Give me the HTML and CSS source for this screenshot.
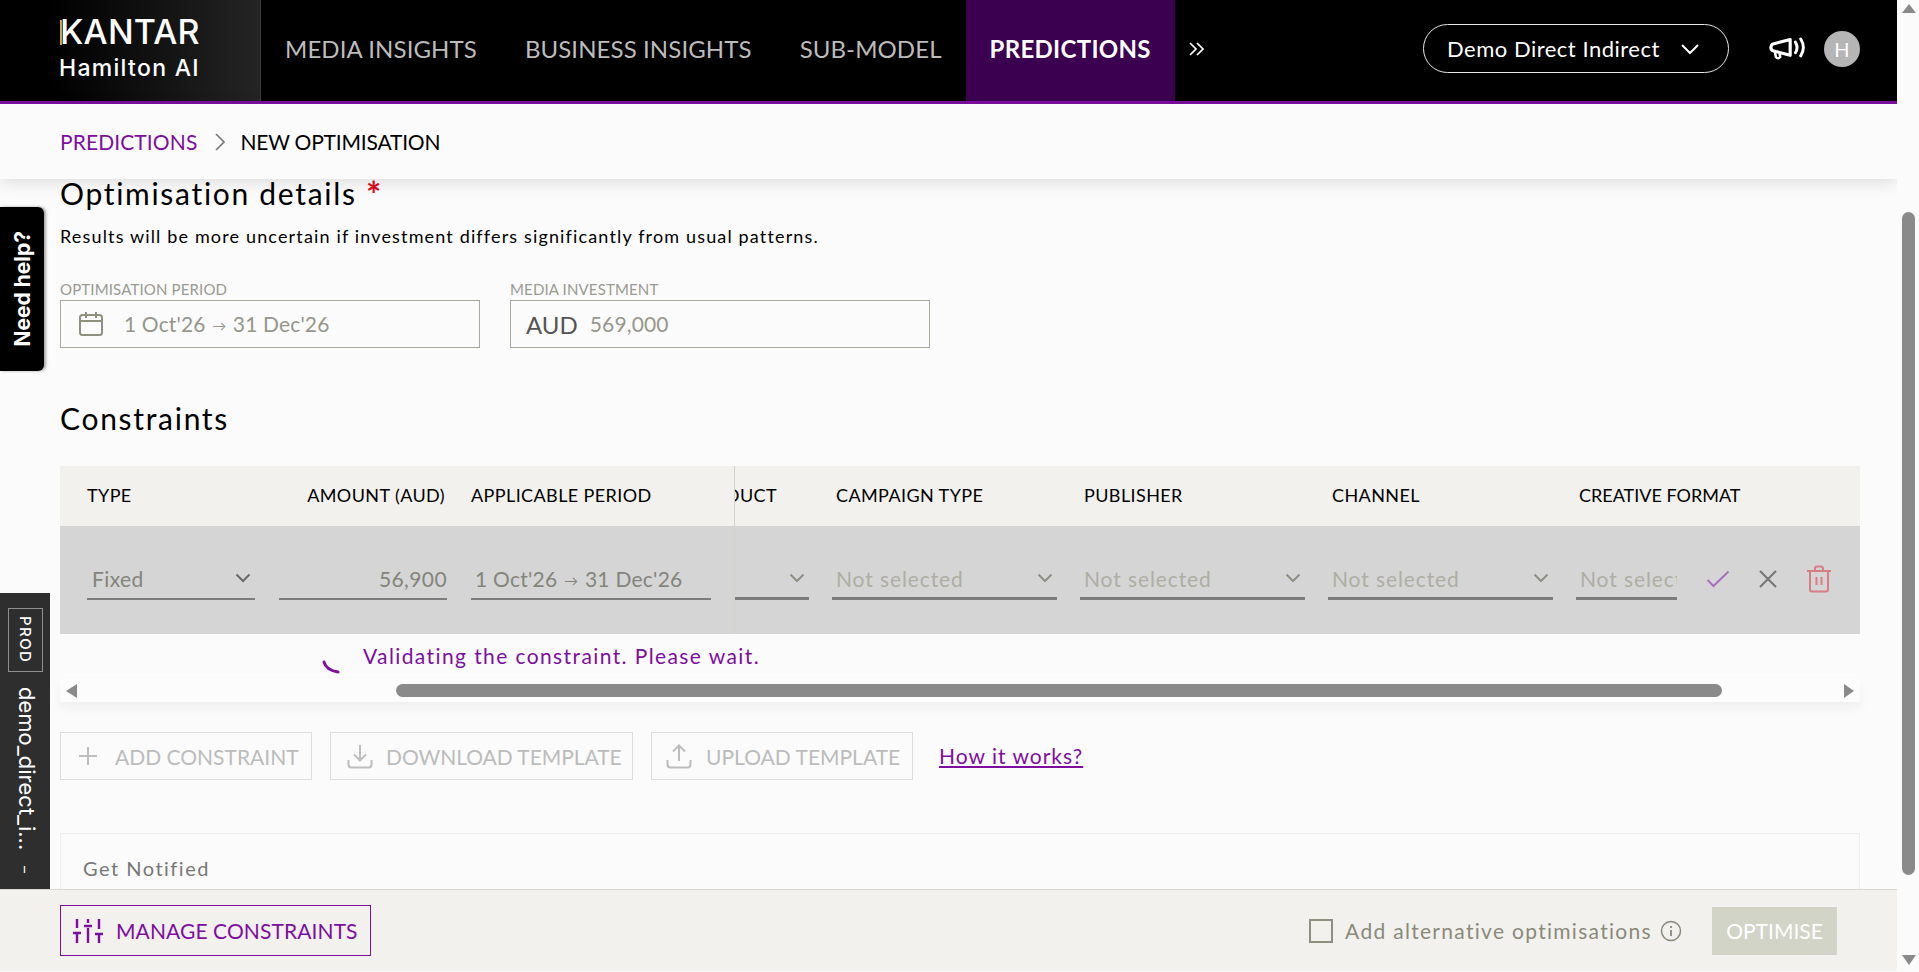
FILE: index.html
```html
<!DOCTYPE html>
<html lang="en">
<head>
<meta charset="utf-8">
<title>New optimisation</title>
<link rel="stylesheet" href="styles.css">
</head>
<body>
<div class="app">
  <div class="main">
    <header class="topbar">
      <div class="brand">
        <div class="brand-name">KANTAR</div>
        <div class="brand-sub">Hamilton AI</div>
      </div>
      <nav class="nav">
        <a class="nav-item nav-media">MEDIA INSIGHTS</a>
        <a class="nav-item nav-business">BUSINESS INSIGHTS</a>
        <a class="nav-item nav-sub">SUB-MODEL</a>
        <a class="nav-item nav-active">PREDICTIONS</a>
        <svg class="nav-more" viewBox="0 0 18 14"><path d="M2 1l6 6-6 6M9 1l6 6-6 6" fill="none" stroke="#fff" stroke-width="1.7"/></svg>
      </nav>
      <div class="topbar-right">
        <button class="model-pill"><span>Demo Direct Indirect</span>
          <svg class="pill-chevron" viewBox="0 0 20 12"><path d="M2 2l8 8 8-8" fill="none" stroke="#fff" stroke-width="2"/></svg>
        </button>
        <svg class="megaphone" viewBox="0 0 36 22"><path d="M4 6.500L21 2v15L4 12.500Q1.500 9.500 4 6.500z" fill="none" stroke="#fff" stroke-width="3" stroke-linejoin="round"/><path d="M6.500 13.500l1 5q2 2.500 4 0l-.5-3.500" fill="none" stroke="#fff" stroke-width="2.400" stroke-linejoin="round"/><path d="M26 4.500q3 5 0 10M31 1.500q5 8 0 16" fill="none" stroke="#fff" stroke-width="2.800" stroke-linecap="round"/></svg>
        <div class="avatar">H</div>
      </div>
    </header>

    <div class="crumbs">
      <a class="crumb-link">PREDICTIONS</a>
      <svg class="crumb-sep" viewBox="0 0 10 18"><path d="M1 1l8 8-8 8" fill="none" stroke="#777" stroke-width="1.600"/></svg>
      <span class="crumb-current">NEW OPTIMISATION</span>
    </div>

    <main class="content">
      <h2 class="section-title">Optimisation details <span class="required">*</span></h2>
      <p class="section-note">Results will be more uncertain if investment differs significantly from usual patterns.</p>

      <div class="fields">
        <div class="field">
          <label class="field-label">OPTIMISATION PERIOD</label>
          <div class="field-box">
            <svg class="cal-icon" viewBox="0 0 26 26"><rect x="2" y="4" width="22" height="20" rx="2.500" fill="none" stroke="#8f907f" stroke-width="2"/><path d="M2 10h22M8 1v6M18 1v6" fill="none" stroke="#8f907f" stroke-width="2"/></svg>
            <span class="field-value">1 Oct'26 <span class="date-arrow">→</span> 31 Dec'26</span>
          </div>
        </div>
        <div class="field">
          <label class="field-label">MEDIA INVESTMENT</label>
          <div class="field-box field-box-money">
            <span class="currency">AUD</span>
            <span class="field-value">569,000</span>
          </div>
        </div>
      </div>

      <h2 class="section-title constraints-title">Constraints</h2>

      <div class="table">
        <div class="pinned">
          <div class="th-row">
            <div class="th col-type">TYPE</div>
            <div class="th col-amount">AMOUNT (AUD)</div>
            <div class="th col-period">APPLICABLE PERIOD</div>
          </div>
          <div class="td-row">
            <div class="cell col-type"><span class="cell-text">Fixed</span><svg class="chev" viewBox="0 0 16 10"><path d="M1.500 1.500L8 8l6.500-6.500" fill="none" stroke="#6a6a6a" stroke-width="2"/></svg></div>
            <div class="cell col-amount cell-right"><span class="cell-text">56,900</span></div>
            <div class="cell col-period"><span class="cell-text">1 Oct'26 <span class="date-arrow">→</span> 31 Dec'26</span></div>
          </div>
        </div>
        <div class="scroller">
          <div class="th-row">
            <div class="th col-product"><span>PRODUCT</span></div>
            <div class="th col-wide">CAMPAIGN TYPE</div>
            <div class="th col-wide">PUBLISHER</div>
            <div class="th col-wide">CHANNEL</div>
            <div class="th col-last">CREATIVE FORMAT</div>
          </div>
          <div class="td-row">
            <div class="cell cell-thick col-product-cell"><svg class="chev chev-light" viewBox="0 0 16 10"><path d="M1.500 1.500L8 8l6.500-6.500" fill="none" stroke="#8f8f85" stroke-width="2"/></svg></div>
            <div class="cell cell-thick col-wide-cell"><span class="cell-muted">Not selected</span><svg class="chev chev-light" viewBox="0 0 16 10"><path d="M1.500 1.500L8 8l6.500-6.500" fill="none" stroke="#8f8f85" stroke-width="2"/></svg></div>
            <div class="cell cell-thick col-wide-cell"><span class="cell-muted">Not selected</span><svg class="chev chev-light" viewBox="0 0 16 10"><path d="M1.500 1.500L8 8l6.500-6.500" fill="none" stroke="#8f8f85" stroke-width="2"/></svg></div>
            <div class="cell cell-thick col-wide-cell"><span class="cell-muted">Not selected</span><svg class="chev chev-light" viewBox="0 0 16 10"><path d="M1.500 1.500L8 8l6.500-6.500" fill="none" stroke="#8f8f85" stroke-width="2"/></svg></div>
            <div class="cell cell-thick col-last-cell"><span class="cell-muted">Not selected</span></div>
            <div class="row-actions">
              <svg class="act-check" viewBox="0 0 24 18"><path d="M1.500 10l6 6L22.500 1.500" fill="none" stroke="#ab6cc4" stroke-width="2"/></svg>
              <svg class="act-close" viewBox="0 0 18 18"><path d="M1 1l16 16M17 1L1 17" fill="none" stroke="#757575" stroke-width="2"/></svg>
              <svg class="act-trash" viewBox="0 0 26 28"><path d="M1 6h24M9 6V3.500Q9 1.500 11 1.500h4q2 0 2 2V6M4 6v18.500Q4 26.500 6 26.500h14q2 0 2-2V6M10.500 12v8M15.500 12v8" fill="none" stroke="#d97d84" stroke-width="2"/></svg>
            </div>
          </div>
        </div>
      </div>

      <div class="validation">
        <svg class="spinner" viewBox="0 0 18 14"><path d="M2 2q2 8 14 10" fill="none" stroke="#7d0ea0" stroke-width="3" stroke-linecap="round"/></svg>
        <span>Validating the constraint. Please wait.</span>
      </div>

      <div class="hscroll">
        <i class="arrow-left"></i>
        <div class="hscroll-track"><div class="hscroll-thumb"></div></div>
        <i class="arrow-right"></i>
      </div>

      <div class="actions">
        <button class="ghost-btn btn-add">
          <svg class="btn-icon-plus" viewBox="0 0 18 18"><path d="M9 0v18M0 9h18" fill="none" stroke="#bdbdbd" stroke-width="2"/></svg>
          ADD CONSTRAINT</button>
        <button class="ghost-btn btn-down">
          <svg class="btn-icon" viewBox="0 0 26 26"><path d="M13 2v15M7 11.500l6 6 6-6M1.500 17v4.500q0 3 3 3h17q3 0 3-3V17" fill="none" stroke="#bdbdbd" stroke-width="2"/></svg>
          DOWNLOAD TEMPLATE</button>
        <button class="ghost-btn btn-up">
          <svg class="btn-icon" viewBox="0 0 26 26"><path d="M13 18V3M7 8.500l6-6 6 6M1.500 17v4.500q0 3 3 3h17q3 0 3-3V17" fill="none" stroke="#bdbdbd" stroke-width="2"/></svg>
          UPLOAD TEMPLATE</button>
        <a class="how-link">How it works?</a>
      </div>

      <section class="notify">Get Notified</section>
    </main>

    <footer class="footer">
      <button class="manage-btn">
        <svg class="manage-icon" viewBox="0 0 30 24"><path d="M4 0v9M4 14v10M15 0v4M15 9v15M26 0v10M26 15v9M0 14h8M11 7h8M22 15h8" fill="none" stroke="#7d0ea0" stroke-width="2.400"/></svg>
        MANAGE CONSTRAINTS</button>
      <div class="footer-right">
        <span class="checkbox"></span>
        <span class="alt-label">Add alternative optimisations</span>
        <svg class="info" viewBox="0 0 22 22"><circle cx="11" cy="11" r="9.500" fill="none" stroke="#8a8a7a" stroke-width="1.500"/><path d="M11 10v6M11 6v2" fill="none" stroke="#8a8a7a" stroke-width="1.800"/></svg>
        <button class="optimise-btn">OPTIMISE</button>
      </div>
    </footer>
  </div>

  <aside class="vscroll">
    <i class="arrow-up"></i>
    <div class="vscroll-track"><div class="vscroll-thumb"></div></div>
    <i class="arrow-down"></i>
  </aside>

  <div class="help-tab"><span>Need help?</span></div>
  <div class="env-tab">
    <span class="env-badge">PROD</span>
    <span class="env-name">demo_direct_i...</span>
    <span class="env-dash">–</span>
  </div>
</div>
</body>
</html>
```

FILE: styles.css
```css
* { box-sizing: border-box; }
html, body { margin: 0; height: 100%; overflow: hidden; }
body { font-family: "Lato", "Liberation Sans", sans-serif; background: #fbfbfb; color: #000; }
button { font-family: inherit; }

.app { position: relative; display: flex; height: 972px; }
.main { width: 1897px; flex: none; display: flex; flex-direction: column; height: 971px; overflow: hidden; }

/* top bar */
.topbar { height: 104px; flex: none; display: flex; background: #000; border-bottom: 3px solid #7d0ea0; }
.brand { width: 261px; padding: 12px 0 0 60px; background: linear-gradient(90deg, #000 20%, #242424 100%); border-right: 1px solid #3a3a3a; color: #fff; font-family: "Inter", sans-serif; font-weight: 500; }
.brand-name { position: relative; font-size: 34px; line-height: 40px; letter-spacing: .2px; }
.brand-name::before { content: ""; position: absolute; left: 0; top: 8px; width: 1.500px; height: 25px; background: #c9a93c; }
.brand-sub { font-size: 23px; line-height: 29px; letter-spacing: 1.300px; margin: 2px 0 0 -1px; }
.nav { display: flex; align-items: stretch; }
.nav-item { display: flex; align-items: center; font-size: 24px; color: #bcbcbc; padding: 0 24px 4px; letter-spacing: .1px; }
.nav-active { background: #3c0050; color: #fff; font-weight: 700; letter-spacing: .3px; }
.nav-more { width: 18px; height: 14px; align-self: center; margin: 0 0 4px 13px; }
.topbar-right { margin-left: auto; display: flex; align-items: center; padding: 0 37px 4px 0; }
.model-pill { width: 306px; height: 49px; background: #000; border: 1px solid #e8e8e8; border-radius: 25px; color: #fff; font-size: 22px; padding: 0 28px 0 23px; display: flex; align-items: center; justify-content: space-between; letter-spacing: .5px; }
.pill-chevron { width: 20px; height: 12px; }
.megaphone { width: 38px; height: 24px; margin-left: 39px; }
.avatar { width: 36px; height: 36px; border-radius: 50%; background: #b5b5b5; color: #fff; margin-left: 18px; display: flex; align-items: center; justify-content: center; font-size: 20px; }

/* breadcrumb */
.crumbs { position: relative; z-index: 2; height: 75px; flex: none; display: flex; align-items: center; padding-left: 60px; background: #fbfbfb; font-size: 21px; box-shadow: 0 3px 16px rgba(0, 0, 0, .13); }
.crumb-link { color: #7d0ea0; letter-spacing: .1px; }
.crumb-sep { width: 10px; height: 18px; margin: 0 15px 0 18px; }
.crumb-current { letter-spacing: -.2px; }

/* content */
.content { flex: 1; min-height: 0; padding: 0 37px 0 60px; }
.section-title { margin: 0; height: 30px; font-weight: 400; font-size: 30px; line-height: 28px; letter-spacing: 1.700px; white-space: nowrap; }
.required { color: #d80f1e; font-size: 36px; font-weight: 700; letter-spacing: 0; line-height: 28px; vertical-align: -3px; }
.section-note { margin: 15px 0 0; font-size: 18px; line-height: 24px; letter-spacing: 1.150px; }
.fields { display: flex; gap: 30px; margin-top: 33px; }
.field { width: 420px; }
.field-label { display: block; font-size: 15px; line-height: 16px; color: #999a92; margin-bottom: 3px; letter-spacing: .15px; }
.field-box { height: 48px; border: 1px solid #a8a99a; display: flex; align-items: center; padding-left: 17px; }
.cal-icon { width: 26px; height: 26px; margin-right: 20px; }
.field-value { font-size: 21px; color: #96968c; letter-spacing: .15px; padding-bottom: 2px; }
.date-arrow { font-size: 14px; vertical-align: 1px; margin: 0 1px; }
.field-box-money { padding-left: 15px; }
.currency { font-size: 24px; color: #555; margin-right: 12px; }
.constraints-title { margin-top: 56px; }

/* table */
.table { display: flex; margin-top: 32px; }
.pinned { width: 675px; flex: none; }
.scroller { flex: 1; min-width: 0; overflow: hidden; border-left: 1px solid #d4d4c8; margin-left: -1px; }
.th-row { height: 60px; background: #f2f1ed; display: flex; align-items: center; font-size: 18px; letter-spacing: .4px; padding-bottom: 2px; }
.td-row { height: 108px; background: #d5d5d5; display: flex; align-items: flex-start; padding-top: 46px; }
.col-type { width: 168px; margin-left: 27px; flex: none; }
.col-amount { width: 168px; margin-left: 24px; flex: none; text-align: right; }
.col-period { width: 240px; margin-left: 24px; flex: none; }
.th.col-amount { padding-right: 2px; }
.col-product { width: 97px; overflow: hidden; display: flex; justify-content: flex-end; padding-right: 55px; flex: none; }
.col-product span { flex: none; }
.col-wide { width: 248px; padding-left: 4px; flex: none; }
.col-last { flex: none; padding-left: 3px; white-space: nowrap; letter-spacing: 0; }
.cell { height: 28px; border-bottom: 2px solid #7d7d7d; display: flex; align-items: center; justify-content: space-between; font-size: 21px; padding-bottom: 14px; }
.cell-thick { border-bottom-width: 3px; padding-bottom: 13px; }
.cell-right { justify-content: flex-end; }
.col-type .cell-text { margin-left: 5px; }
.col-period .cell-text { margin-left: 4px; letter-spacing: .25px; }
.cell-text { color: #84847c; letter-spacing: .4px; white-space: nowrap; }
.cell-muted { color: #aeaea2; letter-spacing: .9px; white-space: nowrap; overflow: hidden; margin-left: 4px; }
.chev { width: 16px; height: 10px; margin-right: 4px; flex: none; }
.col-product-cell { width: 74px; justify-content: flex-end; flex: none; }
.col-wide-cell { width: 225px; margin-left: 23px; flex: none; }
.col-last-cell { width: 101px; margin-left: 23px; flex: none; overflow: hidden; justify-content: flex-start; }
.row-actions { display: flex; align-items: center; height: 30px; margin: -8px 0 0 29px; }
.act-check { width: 24px; height: 18px; }
.act-close { width: 18px; height: 18px; margin-left: 29px; }
.act-trash { width: 26px; height: 28px; margin-left: 29px; }

.validation { height: 45px; display: flex; align-items: flex-start; padding: 9px 0 0 262px; color: #7d0ea0; font-size: 21px; letter-spacing: 1.400px; line-height: 26px; }
.spinner { width: 18px; height: 14px; margin: 17px 23px 0 0; }

.hscroll { height: 23px; background: #fcfcfc; display: flex; align-items: center; box-shadow: 0 6px 12px rgba(0, 0, 0, .05); }
.arrow-left { width: 0; height: 0; margin-left: 6px; border: 7px solid transparent; border-left: 0; border-right: 11px solid #8a8a8a; }
.arrow-right { width: 0; height: 0; margin-right: 6px; border: 7px solid transparent; border-right: 0; border-left: 10px solid #8a8a8a; }
.hscroll-track { flex: 1; padding-left: 319px; padding-right: 122px; }
.hscroll-thumb { height: 13px; border-radius: 7px; background: #8a8a8a; }

.actions { display: flex; align-items: center; margin-top: 30px; }
.ghost-btn { height: 48px; display: flex; align-items: center; background: transparent; border: 1px solid #dcdcdc; color: #bcbcbc; font-size: 21px; padding: 0; white-space: nowrap; }
.btn-add { width: 252px; padding-left: 18px; }
.btn-down { width: 303px; margin-left: 18px; padding-left: 16px; letter-spacing: -.05px; }
.btn-up { width: 262px; margin-left: 18px; padding-left: 14px; }
.btn-icon-plus { width: 18px; height: 18px; margin-right: 18px; }
.btn-down .btn-icon { margin-right: 13px; }
.btn-icon { width: 26px; height: 26px; margin-right: 14px; }
.how-link { margin-left: 26px; color: #7d0ea0; font-size: 21px; text-decoration: underline; letter-spacing: 1px; padding-bottom: 2px; }

.notify { margin-top: 53px; height: 80px; border: 1px solid #eeeeec; padding: 21px 0 0 22px; font-size: 20px; line-height: 26px; color: #777; letter-spacing: 1.500px; }

/* footer */
.footer { height: 82px; flex: none; display: flex; align-items: center; justify-content: space-between; background: #f2f1ed; border-top: 1px solid #d8d8d0; padding: 0 60px; position: relative; z-index: 2; }
.manage-btn { width: 311px; height: 51px; display: flex; align-items: center; border: 1.500px solid #7d0ea0; background: transparent; color: #7d0ea0; font-size: 21px; padding: 0 0 0 12px; white-space: nowrap; letter-spacing: .1px; }
.manage-icon { width: 30px; height: 24px; margin-right: 13px; }
.footer-right { display: flex; align-items: center; }
.checkbox { width: 24px; height: 24px; border: 2px solid #8e8f7e; margin-right: 12px; }
.alt-label { font-size: 21px; color: #8a8a7a; letter-spacing: 1.300px; }
.info { width: 22px; height: 22px; margin: 0 30px 0 8px; }
.optimise-btn { width: 125px; height: 48px; background: #d2d4c8; border: 0; color: #fff; font-size: 21px; padding: 0; }

/* page scrollbar */
.vscroll { width: 22px; flex: none; display: flex; flex-direction: column; align-items: center; background: #fbfbfb; padding-left: 1px; }
.arrow-up { width: 0; height: 0; margin-top: 4px; border: 7px solid transparent; border-top: 0; border-bottom: 9px solid #8a8a8a; }
.arrow-down { width: 0; height: 0; margin-bottom: 7px; border: 7px solid transparent; border-bottom: 0; border-top: 10px solid #8a8a8a; }
.vscroll-track { flex: 1; width: 13px; padding: 199px 0 80px; }
.vscroll-thumb { height: 100%; background: #8a8a8a; border-radius: 7px; }

/* floating tabs */
.help-tab { position: absolute; left: 0; top: 207px; width: 44px; height: 164px; background: #000; border-radius: 0 6px 6px 0; box-shadow: 2px 0 3px rgba(0, 0, 0, .35); display: flex; align-items: center; justify-content: center; }
.help-tab span { writing-mode: vertical-rl; transform: rotate(180deg); color: #fff; font-family: "Inter", sans-serif; font-weight: 700; font-size: 21px; white-space: nowrap; }
.env-tab { position: absolute; left: 0; top: 593px; width: 50px; height: 300px; background: #2e2e2e; color: #fff; display: flex; align-items: center; padding-top: 15px; writing-mode: vertical-rl; font-family: "Inter", sans-serif; }
.env-badge { width: 35px; height: 64px; border: 1px solid #8f8f8f; display: flex; align-items: center; justify-content: center; font-size: 15px; font-weight: 500; letter-spacing: 1.400px; }
.env-name { font-size: 22px; margin: 15px 0 0 3px; line-height: 34px; white-space: nowrap; }
.env-dash { font-size: 14px; margin-top: 16px; line-height: 34px; }
```
